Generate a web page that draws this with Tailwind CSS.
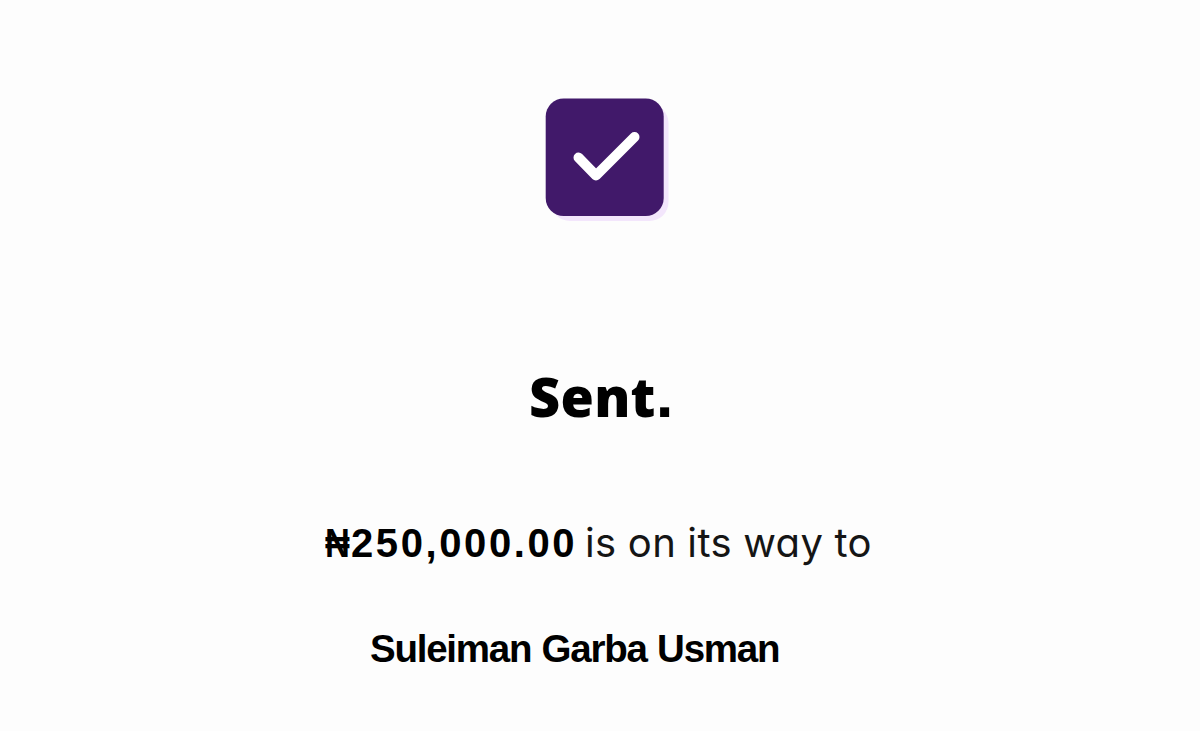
<!DOCTYPE html>
<html lang="en">
<head>
    <meta charset="UTF-8">
    <meta name="viewport" content="width=device-width, initial-scale=1.0">
    <title>Sent</title>
    <script src="https://cdn.jsdelivr.net/npm/@tailwindcss/browser@4"></script>
</head>
<body class="bg-[#fdfdfd] h-screen overflow-hidden flex flex-col text-black">
    <div class="mt-[98px] ml-[545px]">
        <svg class="w-[125px] h-[125px]" viewBox="0 0 125 125" fill="none">
            <rect x="6" y="6" width="117.500" height="117" rx="19" fill="#f3e6fc"/>
            <rect x="0.700" y="0.500" width="118" height="117.500" rx="18" fill="#41196a"/>
            <path d="M33.500 59.500L51 77.500L89.500 39" stroke="#fff" stroke-width="10" stroke-linecap="round" stroke-linejoin="round"/>
        </svg>
    </div>
    <h1 class="mt-[136px] ml-[529px] h-[75px] leading-[75px] text-[54px] font-extrabold font-['Open_Sans',sans-serif] tracking-[0.3px] whitespace-nowrap">Sent<span class="text-[64px] leading-none font-['Liberation_Sans',sans-serif]">.</span></h1>
    <div class="mt-[79px] ml-[325px] h-[60px] flex items-baseline whitespace-nowrap leading-[60px]">
        <div class="flex w-[260px] text-[40px] font-bold font-['Liberation_Sans',sans-serif]">
            <span class="w-[26px] origin-left scale-x-[0.86]">₦</span>
            <span class="tracking-[2.6px]">250,000.00</span>
        </div>
        <span class="text-[40px] text-[#151515] font-['Inter',sans-serif] tracking-[0.4px] [word-spacing:-0.5px] [font-feature-settings:'cv11']">is on its way to</span>
    </div>
    <p class="mt-[46px] ml-[370px] h-[60px] leading-[60px] text-[38.500px] font-bold font-['Liberation_Sans',sans-serif] tracking-[-1.25px] [word-spacing:1px] whitespace-nowrap">Suleiman Garba Usman</p>
</body>
</html>
